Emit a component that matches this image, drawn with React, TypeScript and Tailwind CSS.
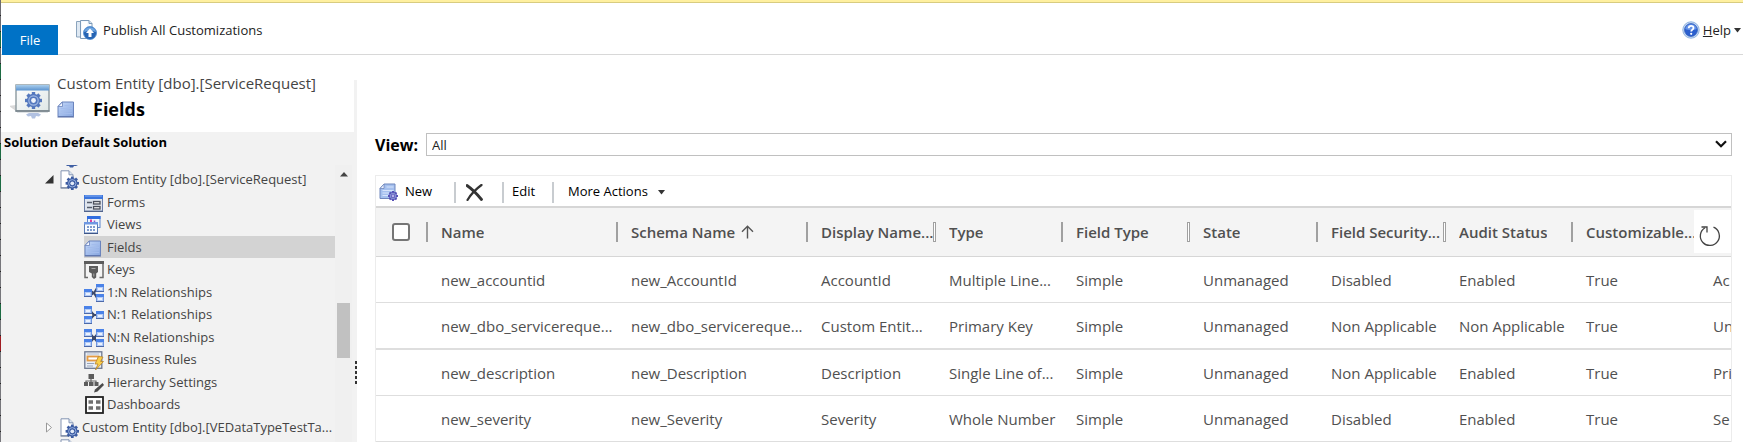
import React, { useState } from 'react';

// Coloured slivers of the window behind, seen at the very left edge
const edgeColors = [
  'bg-[#6b6b70]', 'bg-[#6b6b70]', 'bg-[#1d6b43]', 'bg-[#6b6b70]', 'bg-[#1d6b43]', 'bg-[#77777c]', 'bg-[#77777c]',
  'bg-[#77777c]', 'bg-[#77777c]', 'bg-[#1d6b43]', 'bg-[#77777c]', 'bg-[#1d6b43]', 'bg-[#77777c]', 'bg-[#77777c]',
  'bg-[#77777c]', 'bg-[#77777c]', 'bg-[#77777c]', 'bg-[#77777c]', 'bg-[#77777c]', 'bg-[#1d6b43]', 'bg-[#77777c]',
  'bg-[#a01c22]', 'bg-[#77777c]', 'bg-[#77777c]', 'bg-[#77777c]', 'bg-[#77777c]', 'bg-[#77777c]', 'bg-[#77777c]',
];

const Gear = ({ cx, cy, r, fill, hole }: { cx: number; cy: number; r: number; fill: string; hole: string }) => (
  <g transform={`translate(${cx} ${cy})`}>
    {[0, 45, 90, 135].map((a) => (
      <rect key={a} x={-r * 0.2} y={-r} width={r * 0.4} height={r * 2} fill={fill} transform={`rotate(${a})`} />
    ))}
    <circle r={r * 0.78} fill={fill} />
    <circle r={r * 0.55} fill="none" stroke="#9fb8e4" strokeWidth={r * 0.14} />
    <circle r={r * 0.28} fill={hole} />
  </g>
);

const PublishIcon = () => (
  <svg width="21" height="20" viewBox="0 0 21 20">
    <path d="M.5 1.500h8v15.500h-8z" fill="#dfe9f3" stroke="#8ba4bd" />
    <path d="M4.500 .5h8.500l3 3v15h-11.500z" fill="#f6fafe" stroke="#7d9ab8" />
    <path d="M6 2h5v15H6z" fill="#fff" />
    <path d="M13 .5v3h3" fill="#d5e2ef" stroke="#7d9ab8" />
    <circle cx="14" cy="13" r="6.500" fill="#2765b4" stroke="#4d8bd2" strokeWidth=".8" />
    <path d="M8 12a6.200 6.200 0 0 1 12 0c-3.500-1.500-8.500-1.500-12 0z" fill="#6ea5e0" />
    <path d="M14 8.500l4 4.500h-2.500v4h-3v-4H10z" fill="#fff" />
  </svg>
);

const HelpIcon = () => (
  <svg width="18" height="18" viewBox="0 0 18 18">
    <circle cx="9" cy="9" r="8.200" fill="#c9dcf4" stroke="#8fb2e0" />
    <circle cx="9" cy="9" r="6.500" fill="#2b5fce" stroke="#2453b4" strokeWidth=".6" />
    <path d="M3.200 8a5.900 5.900 0 0 1 11.600 0c-3 1.500-8.500 1.500-11.600 0z" fill="#6492e8" />
    <path d="M6.700 7.200c0-3.200 4.800-3.100 4.800-.3 0 1.700-2.300 1.700-2.300 3.600" fill="none" stroke="#fff" strokeWidth="1.800" />
    <circle cx="9.200" cy="12.800" r="1.100" fill="#fff" />
  </svg>
);

const EntityWindowIcon = () => (
  <svg width="40" height="35" viewBox="0 0 40 35">
    <defs>
      <linearGradient id="winBody" x1="0" y1="0" x2="1" y2="1">
        <stop offset="0" stopColor="#fff" />
        <stop offset="1" stopColor="#dfe7e6" />
      </linearGradient>
      <linearGradient id="winBar" x1="0" y1="0" x2="0" y2="1">
        <stop offset="0" stopColor="#a9cdec" />
        <stop offset="1" stopColor="#5b93cf" />
      </linearGradient>
    </defs>
    <path d="M-1 22l7-1v6z" fill="#d9d9d9" />
    <rect x="6" y="1" width="33" height="26" fill="url(#winBody)" stroke="#8c999f" strokeWidth="1.400" />
    <rect x="6" y="1" width="33" height="5.500" fill="url(#winBar)" />
    <path d="M5.500 27h34" stroke="#76828a" strokeWidth="1.400" />
    <Gear cx={23.500} cy={16.500} r={8.500} fill="#5478be" hole="#eef3fb" />
    <g opacity=".45">
      <path d="M16 30.500l3-1.500h9l3 1.500-2 2-3-.5-1 2.500h-3l-1-2.500-3 .5z" fill="#5478be" />
      <path d="M7 28.500h31" stroke="#b9c3c9" />
    </g>
  </svg>
);

const FieldIcon = () => (
  <svg width="18" height="17" viewBox="0 0 18 17">
    <defs>
      <linearGradient id="fieldFill" x1="0" y1="0" x2="1" y2="1">
        <stop offset="0" stopColor="#c4d8f9" />
        <stop offset="1" stopColor="#86a5df" />
      </linearGradient>
    </defs>
    <path d="M5 1h11.500v14.500h-15.500v-10z" fill="url(#fieldFill)" stroke="#6b84bd" />
    <path d="M5.500 1v4.500h-4.500z" fill="#f2f6ff" stroke="#6b84bd" strokeWidth=".8" />
    <path d="M7.500 4.500h7.500M3.500 7.500h11.500M3.500 10h11.500M3.500 12.500h11.500" stroke="#a3bcec" />
    <path d="M.5 16h16.500" stroke="#566ca5" />
  </svg>
);

const NewFieldIcon = () => (
  <svg width="19" height="18" viewBox="0 0 19 18">
    <path d="M5 1h11v14.500H1v-10z" fill="#a5c0ee" stroke="#6f87bd" />
    <path d="M5 1v4.500H1z" fill="#eef4ff" stroke="#6f87bd" strokeWidth=".8" />
    <path d="M7.500 4h7M3.500 7.500h11M3.500 10h7M3.500 12.500h6" stroke="#d7e4fb" />
    <Gear cx={14} cy={13} r={5} fill="#5650b6" hole="#b5b2ea" />
  </svg>
);

const EntityIcon = () => (
  <svg width="19" height="20" viewBox="0 0 19 20">
    <path d="M1 .8h8l4 4v13H1z" fill="#fff" stroke="#8494b2" />
    <path d="M9 .8v4h4" fill="#dde6f2" stroke="#8494b2" />
    <path d="M.5 18h8" stroke="#6c7a94" />
    <Gear cx={12.300} cy={13.300} r={6.700} fill="#3c5ca2" hole="#e4ecf9" />
  </svg>
);

const FormsIcon = () => (
  <svg width="19" height="17" viewBox="0 0 19 17">
    <rect x=".5" y=".5" width="18" height="15.500" fill="#dfe5ee" stroke="#6b7fa6" />
    <rect x="0" y="0" width="19" height="4" fill="#3a74dc" />
    <path d="M1 1h17" stroke="#86aef2" />
    <path d="M3 7.500h5M3 12.500h5" stroke="#555c6a" strokeWidth="1.500" />
    <rect x="9.500" y="6.500" width="6.500" height="2.500" fill="#eee" stroke="#4a4f5a" strokeWidth="1.300" />
    <rect x="9.500" y="11.500" width="6.500" height="2.500" fill="#eee" stroke="#4a4f5a" strokeWidth="1.300" />
    <path d="M0 16.500h19" stroke="#52648c" />
  </svg>
);

const ViewsIcon = () => (
  <svg width="17" height="18" viewBox="0 0 17 18">
    <rect x="3.500" y=".5" width="12.500" height="11" fill="#eef4fd" stroke="#5c85cc" />
    <rect x="3" y="0" width="13.500" height="3" fill="#2f6ce0" />
    <path d="M7 3.500v2.500" stroke="#e0409a" strokeWidth="2" />
    <path d="M10.500 4.500v2" stroke="#8a5bd0" strokeWidth="1.500" />
    <rect x=".5" y="6.500" width="13" height="10.500" fill="#fafcff" stroke="#5b7cb6" />
    <rect x="0" y="6" width="14" height="2.500" fill="#6f98e2" />
    <path d="M3 11h2M6 11h2M9 11h2M3 14h2M6 14h2M9 14h2" stroke="#7f9cce" strokeWidth="2" />
    <path d="M0 17.500h14" stroke="#3e5688" />
  </svg>
);

const KeysIcon = () => (
  <svg width="20" height="18" viewBox="0 0 20 18">
    <path d="M4 16.500H1V1h18v15.500h-3.500" fill="#f4f4f4" stroke="#6a6a6a" strokeWidth="1.500" />
    <path d="M0 1.500h20" stroke="#5c5c5c" strokeWidth="3" />
    <path d="M5 5h9v6l-1.800 1.500v4L10 18l-2.200-2v-3.500L5 11z" fill="#5c5c5c" />
    <path d="M7.500 7.500h4M9.800 12.500v3" stroke="#aaa" />
  </svg>
);

const Node = ({ x, y }: { x: number; y: number }) => (
  <g>
    <rect x={x + 0.5} y={y + 0.5} width="7" height="7" fill="#b4ccf6" stroke="#7096de" />
    <rect x={x} y={y} width="8" height="3" fill="#4a82e8" />
    <path d={`M${x + 2} ${y + 5}h4`} stroke="#fff" strokeWidth="1.500" />
    <path d={`M${x} ${y + 7.500}h8`} stroke="#4c69a8" />
  </g>
);

const OneToManyIcon = () => (
  <svg width="20" height="18" viewBox="0 0 20 18">
    <path d="M7 9h3l3-5M10 9l3 5" stroke="#3c4a6c" strokeWidth="2" fill="none" />
    <Node x={0} y={5} />
    <Node x={12} y={0} />
    <Node x={12} y={10} />
    <path d="M8 6.500l3.500 2.500L8 11.500z" fill="#3c4a6c" />
  </svg>
);

const ManyToOneIcon = () => (
  <svg width="20" height="18" viewBox="0 0 20 18">
    <path d="M12 9h-2L6 4M10 9l-4 5" stroke="#3c4a6c" strokeWidth="2" fill="none" />
    <Node x={0} y={0} />
    <Node x={0} y={10} />
    <Node x={12} y={5} />
    <path d="M8.500 6.500L12 9l-3.500 2.500z" fill="#3c4a6c" />
  </svg>
);

const ManyToManyIcon = () => (
  <svg width="20" height="18" viewBox="0 0 20 18">
    <path d="M6 4l8 10M14 4L6 14" stroke="#3c4a6c" strokeWidth="2" />
    <Node x={0} y={0} />
    <Node x={0} y={10} />
    <Node x={12} y={0} />
    <Node x={12} y={10} />
    <path d="M8 7h4v4H8z" fill="#3c4a6c" />
  </svg>
);

const RulesIcon = () => (
  <svg width="20" height="19" viewBox="0 0 20 19">
    <rect x=".8" y=".8" width="17" height="16.500" fill="#e9eef6" stroke="#6d7890" strokeWidth="1.300" />
    <path d="M3 3h12" stroke="#b4bfd1" />
    <rect x="3.500" y="5.500" width="11" height="4" fill="#fff" stroke="#e39a42" strokeWidth="1.800" />
    <path d="M3 12.500h7M3 15h6" stroke="#97a3b8" />
    <path d="M14.500 5.500l4.500 .5-2.500 4.500h3L11.500 19l2.500-6h-3z" fill="#f9cf4a" stroke="#b9832a" strokeWidth=".8" />
  </svg>
);

const HierarchyIcon = () => (
  <svg width="20" height="19" viewBox="0 0 20 19">
    <path d="M7 4v4M2 9V7h10v2" stroke="#666" fill="none" strokeWidth="1.200" />
    <rect x="4.500" y="0" width="5.500" height="5" fill="#5c5c5c" />
    <rect x="0" y="8" width="4" height="4" fill="#5c5c5c" />
    <rect x="5" y="8" width="4.500" height="4" fill="#5c5c5c" />
    <rect x="10.500" y="8" width="4" height="4" fill="#5c5c5c" />
    <path d="M18.500 9l1.500 2-6.500 6.500-3.500 1 1-3z" fill="#4a4a4a" />
  </svg>
);

const DashboardIcon = () => (
  <svg width="20" height="18" viewBox="0 0 20 18">
    <rect x="2" y="1" width="17" height="16" fill="#fff" stroke="#222" strokeWidth="1.800" />
    <path d="M4.500 6h4.500M12 6h4.500M4.500 12h4.500M12 12h4.500" stroke="#707070" strokeWidth="3.500" />
  </svg>
);

const CaretDown = () => (
  <svg width="7" height="5" viewBox="0 0 7 5">
    <path d="M0 0h7L3.500 4.500z" fill="#333" />
  </svg>
);

const treeItems = [
  { label: 'Forms', icon: <FormsIcon /> },
  { label: 'Views', icon: <ViewsIcon /> },
  { label: 'Fields', icon: <FieldIcon /> },
  { label: 'Keys', icon: <KeysIcon /> },
  { label: '1:N Relationships', icon: <OneToManyIcon /> },
  { label: 'N:1 Relationships', icon: <ManyToOneIcon /> },
  { label: 'N:N Relationships', icon: <ManyToManyIcon /> },
  { label: 'Business Rules', icon: <RulesIcon /> },
  { label: 'Hierarchy Settings', icon: <HierarchyIcon /> },
  { label: 'Dashboards', icon: <DashboardIcon /> },
];

const columns = [
  { label: 'Name', width: 'w-[190px]' },
  { label: 'Schema Name', width: 'w-[190px]', sorted: true },
  { label: 'Display Name...', width: 'w-[128px]', grip: true },
  { label: 'Type', width: 'w-[127px]' },
  { label: 'Field Type', width: 'w-[127px]', grip: true },
  { label: 'State', width: 'w-[128px]' },
  { label: 'Field Security...', width: 'w-[128px]', grip: true },
  { label: 'Audit Status', width: 'w-[127px]' },
  { label: 'Customizable...', width: 'w-[127px]' },
];

const rows = [
  ['new_accountid', 'new_AccountId', 'AccountId', 'Multiple Line...', 'Simple', 'Unmanaged', 'Disabled', 'Enabled', 'True', 'Ac'],
  ['new_dbo_servicereque...', 'new_dbo_servicereque...', 'Custom Entit...', 'Primary Key', 'Simple', 'Unmanaged', 'Non Applicable', 'Non Applicable', 'True', 'Un'],
  ['new_description', 'new_Description', 'Description', 'Single Line of...', 'Simple', 'Unmanaged', 'Non Applicable', 'Enabled', 'True', 'Pri'],
  ['new_severity', 'new_Severity', 'Severity', 'Whole Number', 'Simple', 'Unmanaged', 'Disabled', 'Enabled', 'True', 'Se'],
];

function Ribbon() {
  return (
    <header className="flex h-[52px] items-end border-b border-[#d8d8d8] pl-px">
      <button className="-mb-px h-[30px] w-14 shrink-0 bg-[#0072c6] pt-0.5 text-[13px] text-white">File</button>
      <div className="flex flex-1 items-center justify-between self-start pt-[17px] pl-[18px]">
        <button className="flex items-center gap-[6px] text-[13px] leading-5 text-[#222]">
          <PublishIcon />
          Publish All Customizations
        </button>
        <button className="flex items-center gap-[3px] pr-0.5 text-[13px] leading-5 text-[#222]">
          <HelpIcon />
          <span><span className="underline">H</span>elp</span>
          <CaretDown />
        </button>
      </div>
    </header>
  );
}

function Sidebar() {
  const [selected, setSelected] = useState('Fields');

  return (
    <aside className="flex w-[356px] shrink-0 flex-col">
      <div className="h-[25px]" />
      <div className="flex h-[52px] gap-[7px] border-r-[3px] border-[#f2f2f2] pl-[9px]">
        <div className="pt-1"><EntityWindowIcon /></div>
        <div className="-mt-[9px]">
          <div className="text-[15px] leading-6 text-[#444]">Custom Entity [dbo].[ServiceRequest]</div>
          <div className="flex items-center gap-[18px]">
            <FieldIcon />
            <h1 className="text-lg leading-7 font-bold text-black">Fields</h1>
          </div>
        </div>
      </div>
      <div className="flex flex-1 flex-col bg-[#f2f2f2]">
        <h2 className="pl-[3px] text-[13px] leading-5 font-bold text-black">Solution Default Solution</h2>
        <div className="mt-[13px] flex flex-1">
          <nav className="w-[334px] text-[13px] text-[#444]">
            <svg width="14" height="3" viewBox="0 0 14 3" className="ml-[65px]">
              <path d="M0 0h12l-2 1h-2l-1 1.500h-3l-1-1.500h-2z" fill="#3f5fa3" />
            </svg>
            <button className="flex h-[23px] w-full items-center pl-11">
              <svg width="9" height="9" viewBox="0 0 9 9"><path d="M8.500 0v8.500H0z" fill="#333" /></svg>
              <span className="mr-[3px] ml-[6px]"><EntityIcon /></span>
              Custom Entity [dbo].[ServiceRequest]
            </button>
            <ul className="pl-[83px]">
              {treeItems.map((item) => (
                <li key={item.label} className="h-[22px] even:h-[23px]">
                  <button
                    onClick={() => setSelected(item.label)}
                    className={`flex h-[22px] w-full items-center gap-[3px] pt-0.5 ${selected === item.label ? 'bg-[#d3d3d3]' : ''}`}
                  >
                    <span className="w-5 shrink-0">{item.icon}</span>
                    {item.label}
                  </button>
                </li>
              ))}
            </ul>
            <button className="flex h-[23px] w-full items-center pl-11">
              <svg width="9" height="11" viewBox="0 0 9 11"><path d="M1.500 1l5 4.500-5 4.500z" fill="#fff" stroke="#999" /></svg>
              <span className="mr-[3px] ml-[6px]"><EntityIcon /></span>
              Custom Entity [dbo].[VEDataTypeTestTa...
            </button>
            <div className="h-[3px] overflow-hidden pl-[59px]"><EntityIcon /></div>
          </nav>
          <div className="flex w-[17px] flex-col items-center bg-[#f0f0f0] pt-[7px]">
            <svg width="8" height="5" viewBox="0 0 8 5"><path d="M4 0l4 4.500H0z" fill="#444" /></svg>
            <div className="mt-[126px] h-[55px] w-[13px] bg-[#c1c1c1]" />
          </div>
          <div className="flex flex-1 flex-col items-end gap-0.5 pt-[196px]">
            {[0, 1, 2, 3, 4].map((i) => (
              <span key={i} className="h-[3px] w-0.5 bg-[#333]" />
            ))}
          </div>
        </div>
      </div>
    </aside>
  );
}

function Toolbar() {
  return (
    <div className="flex h-[30px] items-center pt-0.5 pl-[3px] text-[13px] text-black">
      <button className="flex w-[75px] items-center gap-[7px]"><NewFieldIcon />New</button>
      <span className="h-[21px] w-0.5 bg-[#c8ccd0]" />
      <button aria-label="Delete" className="w-[46px] pl-2.5">
        <svg width="17" height="17" viewBox="0 0 17 17">
          <path d="M1 1.500C6 5 11 10 15.500 15.500" stroke="#333" strokeWidth="2.800" strokeLinecap="round" fill="none" />
          <path d="M15.500 1C10 5 5 10 1.500 16" stroke="#333" strokeWidth="2.200" strokeLinecap="round" fill="none" />
        </svg>
      </button>
      <span className="h-[21px] w-0.5 bg-[#c8ccd0]" />
      <button className="w-12 pl-2 text-left">Edit</button>
      <span className="h-[21px] w-0.5 bg-[#c8ccd0]" />
      <button className="flex items-center gap-2.5 pl-[14px]">More Actions <CaretDown /></button>
    </div>
  );
}

function FieldsGrid() {
  return (
    <div className="relative overflow-hidden border-t-2 border-[#d6d6d6]">
      <table className="w-[1452px] table-fixed border-collapse text-left text-[15px] text-[#505050]">
        <thead>
          <tr className="h-[48px] border-b border-[#d6d6d6] bg-[#f4f4f4]">
            <th className="w-[52px] p-0">
              <div className="flex items-center justify-between pl-4">
                <input type="checkbox" aria-label="Select all" className="size-[18px] appearance-none rounded-[3px] border-2 border-[#767676] bg-white" />
                <span className="h-5 w-0.5 bg-[#a0a0a0]" />
              </div>
            </th>
            {columns.map((col) => (
              <th key={col.label} className={`p-0 pl-[13px] font-semibold ${col.width}`}>
                <div className="flex items-center justify-between">
                  <span className="flex items-center gap-1.5 overflow-hidden whitespace-nowrap">
                    {col.label}
                    {col.sorted && (
                      <svg width="13" height="14" viewBox="0 0 13 14" fill="none" stroke="#555" strokeWidth="1.400">
                        <path d="M6.500 13.500V1.500M1 6.800l5.500-5.500L12 6.800" />
                      </svg>
                    )}
                  </span>
                  <span className={col.grip ? 'h-5 w-[3px] shrink-0 border border-[#a0a0a0] bg-white' : 'h-5 w-0.5 shrink-0 bg-[#a0a0a0]'} />
                </div>
              </th>
            ))}
            <th className="p-0" aria-label="Description" />
          </tr>
        </thead>
        <tbody>
          {rows.map((row) => (
            <tr key={row[0]} className="h-[46px] border-b border-[#dedede] nth-2:h-[47px] nth-2:border-b-2">
              <td className="p-0" />
              {row.map((cell, i) => (
                <td key={i} className="p-0 pt-0.5 pl-[13px] whitespace-nowrap">{cell}</td>
              ))}
            </tr>
          ))}
        </tbody>
      </table>
      <button aria-label="Refresh" className="absolute top-0.5 right-0 flex h-[43px] w-[37px] items-center bg-white pt-2 pl-[5px]">
        <svg width="22" height="22" viewBox="0 0 22 22" fill="none" stroke="#444" strokeWidth="1.300">
          <path d="M14.500 2.200a9.500 9.500 0 1 1-8.500 .6" />
          <path d="M2.500 2h5.500v5.500" />
        </svg>
      </button>
    </div>
  );
}

export default function App() {
  return (
    <div className="flex h-screen overflow-hidden bg-white font-['Open_Sans','Noto_Sans',sans-serif]">
      <div className="w-px shrink-0 overflow-hidden">
        {edgeColors.map((color, i) => (
          <div key={i} className={`h-4 border-b border-[#222] ${color}`} />
        ))}
      </div>
      <div className="flex min-w-0 flex-1 flex-col">
        <div className="h-[3px] shrink-0 border-b border-[#d8cc80] bg-[#fff0a0]" />
        <Ribbon />
        <div className="flex min-h-0 flex-1">
          <Sidebar />
          <main className="flex min-w-0 flex-1 flex-col pt-[77px] pr-[11px] pl-[18px]">
            <div className="flex items-center">
              <label htmlFor="view" className="w-[51px] pt-0.5 text-[16px] leading-[22px] font-bold text-black">View:</label>
              <div className="relative flex-1">
                <select id="view" className="block h-[23px] w-full appearance-none border border-[#c0c0c0] bg-white pt-0.5 pl-[5px] text-[13px] text-[#222]">
                  <option>All</option>
                </select>
                <svg width="12" height="8" viewBox="0 0 12 8" className="pointer-events-none absolute top-[7px] right-[5px]">
                  <path d="M1 1.200l5 5 5-5" fill="none" stroke="#111" strokeWidth="2.200" />
                </svg>
              </div>
            </div>
            <section className="mt-[19px] flex-1 border border-b-0 border-[#ececec]">
              <Toolbar />
              <FieldsGrid />
            </section>
          </main>
        </div>
      </div>
    </div>
  );
}
